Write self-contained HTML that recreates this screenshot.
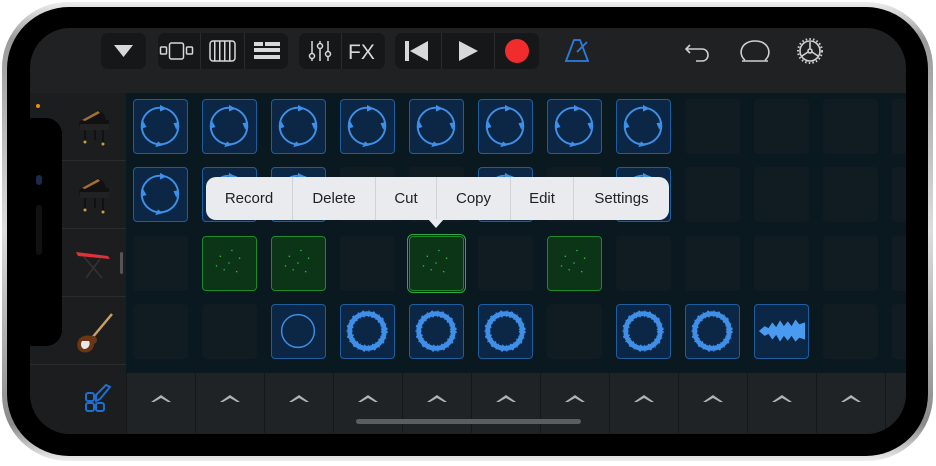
<!DOCTYPE html>
<html><head><meta charset="utf-8">
<style>
*{margin:0;padding:0;box-sizing:border-box}
body{width:936px;height:466px;background:#fff;position:relative;overflow:hidden;font-family:"Liberation Sans",sans-serif}
.abs{position:absolute}
#outer{left:2px;top:2px;width:931px;height:459px;border-radius:66px;background:linear-gradient(#eee,#9a9a9a 8%,#ddd 50%,#8a8a8a 92%,#eee);}
#bez{left:7px;top:7px;width:921px;height:449px;border-radius:62px;background:#000}
#scr{left:30px;top:28px;width:876px;height:406px;border-radius:40px;background:#1f2123;overflow:hidden}
#grid{left:96px;top:65px;width:780px;height:280px;background:#0a1820}
#leftcol{left:0;top:65px;width:96px;height:345px;background:#1c1d1e}
#bottom{left:96px;top:345px;width:780px;height:65px;background:#202325}
#clip{left:30px;top:28px;width:876px;height:406px;border-radius:40px;overflow:hidden}
#inner{left:-30px;top:-28px;width:936px;height:466px}
.btn{position:absolute;top:5px;height:36px;background:#161718;border-radius:7px}
.cell{position:absolute;width:55px;height:55px;border-radius:4px;background:#111c22}
.blue{background:#0b2745;border:1.5px solid #1f5e9e}
.green{background:#0c3417;border:1.5px solid #1f8a2d}
.sel{outline:1.5px solid #2fae3f;outline-offset:1px}
#pop{left:206px;top:177px;width:463px;height:43px;background:#e9ebee;border-radius:10px;display:flex;font-size:15px;color:#222}
#pop div{display:flex;align-items:center;justify-content:center;border-right:1px solid #cfd2d6;height:100%}
#pop div:last-child{border-right:none}
</style></head><body>
<div id="outer" class="abs"></div>
<div id="bez" class="abs"></div>
<div id="scr" class="abs">
  <div id="leftcol" class="abs"></div>
  <div id="grid" class="abs"></div>
  <div id="bottom" class="abs"></div>
</div>
<div class="abs" style="left:28px;top:118px;width:34px;height:228px;background:#000;border-radius:0 16px 16px 0"></div>
<div class="abs" style="left:36px;top:175px;width:6px;height:10px;border-radius:3px;background:#1a2a4a"></div>
<div class="abs" style="left:36px;top:205px;width:6px;height:50px;border-radius:3px;background:#111"></div>
<div class="abs" style="left:36px;top:104px;width:4px;height:4px;border-radius:2px;background:#e8900f"></div>
<div class="abs" style="left:62px;top:160px;width:64px;height:1px;background:#2a2b2c"></div>
<div class="abs" style="left:62px;top:228px;width:64px;height:1px;background:#2a2b2c"></div>
<div class="abs" style="left:62px;top:296px;width:64px;height:1px;background:#2a2b2c"></div>
<div class="abs" style="left:30px;top:364px;width:96px;height:1px;background:#2a2b2c"></div>
<div class="abs" style="left:120px;top:252px;width:3px;height:22px;border-radius:2px;background:#555"></div>

<svg class="abs" style="left:76px;top:106px" width="36" height="42" viewBox="0 0 36 42"><path d="M3 16 L22 4 L28 8 L30 14 L33 14 L33 22 L4 24 Z" fill="#111"/><path d="M6 14 L22 5 L24 7 L9 15Z" fill="#a07030"/><rect x="4" y="18" width="29" height="6" fill="#222"/><rect x="8" y="24" width="2" height="12" fill="#111"/><rect x="26" y="24" width="2" height="14" fill="#111"/><rect x="18" y="24" width="2" height="10" fill="#111"/><circle cx="9" cy="36" r="1.5" fill="#c9a040"/><circle cx="27" cy="38" r="1.5" fill="#c9a040"/></svg>
<svg class="abs" style="left:76px;top:174px" width="36" height="42" viewBox="0 0 36 42"><path d="M3 16 L22 4 L28 8 L30 14 L33 14 L33 22 L4 24 Z" fill="#111"/><path d="M6 14 L22 5 L24 7 L9 15Z" fill="#a07030"/><rect x="4" y="18" width="29" height="6" fill="#222"/><rect x="8" y="24" width="2" height="12" fill="#111"/><rect x="26" y="24" width="2" height="14" fill="#111"/><rect x="18" y="24" width="2" height="10" fill="#111"/><circle cx="9" cy="36" r="1.5" fill="#c9a040"/><circle cx="27" cy="38" r="1.5" fill="#c9a040"/></svg>
<svg class="abs" style="left:74px;top:248px" width="38" height="32" viewBox="0 0 38 32"><path d="M2 4 L34 8 L36 11 L4 8Z" fill="#e0303a"/><path d="M10 9 L28 30 M26 11 L12 30" stroke="#333" stroke-width="1.5"/></svg>
<svg class="abs" style="left:72px;top:312px" width="44" height="44" viewBox="0 0 44 44"><path d="M40 2 L20 26" stroke="#c9a060" stroke-width="2.5"/><path d="M8 26 C4 30 4 38 10 40 C16 42 22 38 22 32 C26 30 26 26 22 24 C18 24 14 22 8 26Z" fill="#6b3616"/><path d="M10 29 C8 32 9 36 12 37 C16 37 19 33 17 29Z" fill="#e8e8e8"/></svg>

<div class="btn" style="left:101px;top:33px;width:45px"></div>
<div class="btn" style="left:158px;top:33px;width:130px"></div>
<div class="btn" style="left:299px;top:33px;width:86px"></div>
<div class="btn" style="left:395px;top:33px;width:144px"></div>
<div class="abs" style="left:200px;top:33px;width:1px;height:36px;background:#2a2b2c"></div>
<div class="abs" style="left:244px;top:33px;width:1px;height:36px;background:#2a2b2c"></div>
<div class="abs" style="left:341px;top:33px;width:1px;height:36px;background:#2a2b2c"></div>
<div class="abs" style="left:441px;top:33px;width:1px;height:36px;background:#2a2b2c"></div>
<div class="abs" style="left:494px;top:33px;width:1px;height:36px;background:#2a2b2c"></div>
<svg class="abs" style="left:0;top:0" width="936" height="100">
 <path d="M114 45 L133 45 L123.5 57Z" fill="#d8d8d8"/>
 <g fill="none" stroke="#d8d8d8" stroke-width="1.5">
  <rect x="160.5" y="47" width="6" height="7" rx="1"/><rect x="169.5" y="43" width="14" height="16" rx="2"/><rect x="186.5" y="47" width="6" height="7" rx="1"/>
  <rect x="210" y="41" width="25" height="20" rx="3"/>
 </g>
 <g fill="#d8d8d8"><rect x="214" y="41" width="1.5" height="20"/><rect x="219" y="41" width="1.5" height="20"/><rect x="224" y="41" width="1.5" height="20"/><rect x="229" y="41" width="1.5" height="20"/>
  <rect x="254" y="42" width="9" height="4"/><rect x="265" y="42" width="15" height="4"/><rect x="254" y="48" width="26" height="4"/><rect x="254" y="55" width="26" height="4"/>
 </g>
 <g stroke="#d8d8d8" stroke-width="1.5" fill="#161718"><line x1="312" y1="41" x2="312" y2="61"/><line x1="320" y1="41" x2="320" y2="61"/><line x1="328" y1="41" x2="328" y2="61"/><circle cx="312" cy="56" r="2.5"/><circle cx="320" cy="46" r="2.5"/><circle cx="328" cy="54" r="2.5"/></g>
 <text x="348" y="59" font-family="Liberation Sans" font-size="21" fill="#d8d8d8">FX</text>
 <rect x="405" y="41" width="4" height="20" fill="#d8d8d8"/><path d="M428 41 L428 61 L410 51Z" fill="#d8d8d8"/>
 <path d="M459 41 L459 61 L478 51Z" fill="#d8d8d8"/>
 <circle cx="517" cy="51" r="12" fill="#f02c2c"/>
 <g fill="none" stroke="#2a7de1" stroke-width="1.8"><path d="M566 61 L574 40 L580 40 L588 61Z"/><line x1="577" y1="52" x2="587" y2="42"/></g>
 <g fill="none" stroke="#d0d0d0" stroke-width="1.6"><path d="M690 45 L686 49 L690 53 M686 49 L702 49 C710 49 710 61 702 61 L696 61"/>
 <path d="M745 60 C738 55 740 41 755 41 C770 41 772 55 765 60 M742 61 L768 61"/>
 <circle cx="810" cy="51" r="10"/><circle cx="810" cy="51" r="2"/><path d="M810 49 L810 42 M808 52 L802 56 M812 52 L818 56"/></g>
 <circle cx="810" cy="51" r="12" fill="none" stroke="#d0d0d0" stroke-width="2" stroke-dasharray="1.5 2.2"/>
</svg>

<div id="clip" class="abs"><div id="inner" class="abs">
<div id="cells"></div>
<div id="bot"></div>
</div></div>
<div class="abs" style="left:356px;top:419px;width:225px;height:5px;border-radius:3px;background:#5b5e61"></div>
<svg class="abs" style="left:84px;top:383px" width="32" height="32" viewBox="0 0 32 32" fill="none" stroke="#1e6fd0" stroke-width="2"><rect x="2" y="10" width="8" height="8" rx="2"/><rect x="2" y="20" width="8" height="8" rx="2"/><rect x="12" y="20" width="8" height="8" rx="2"/><path d="M12 18 L12 12 L22 2 L26 4 L16 16Z"/></svg>

<div id="pop" class="abs">
 <div style="width:87px">Record</div><div style="width:83px">Delete</div><div style="width:61px">Cut</div><div style="width:74px">Copy</div><div style="width:63px">Edit</div><div style="width:95px">Settings</div>
</div>
<div class="abs" style="left:428px;top:219px;width:0;height:0;border-left:8px solid transparent;border-right:8px solid transparent;border-top:9px solid #e9ebee"></div>

<script>
var xs=[133,202,271,340,409,478,547,616,685,754,823,892],ys=[99,167,236,304];
var map=['aaaaaaaa....','aaa..a.a....','.gg.G.g.....','..tccc.ccw..'];
var h='';
function ring(t){
 if(t=='a')return '<circle cx="27" cy="27" r="19" fill="none" stroke="#3f8fe8" stroke-width="2"/><g fill="#3f8fe8"><path d="M27 5 L34 9 L27 12Z"/><path d="M47 23 L44 31 L41 24Z"/><path d="M30 47 L22 49 L25 43Z"/><path d="M7 30 L9 21 L13 28Z"/></g>';
 if(t=='c')return '<circle cx="27" cy="27" r="18" fill="none" stroke="#3f8fe8" stroke-width="5"/><circle cx="27" cy="27" r="18" fill="none" stroke="#3f8fe8" stroke-width="7" stroke-dasharray="2 4 1 3"/>';
 if(t=='t')return '<circle cx="27" cy="27" r="17" fill="none" stroke="#3f8fe8" stroke-width="1.5"/>';
 if(t=='w')return '<path d="M4 27 L10 22 L14 24 L18 18 L22 23 L26 16 L30 22 L34 17 L38 22 L42 15 L46 20 L52 18 L52 36 L46 34 L42 38 L38 32 L34 37 L30 32 L26 38 L22 31 L18 36 L14 30 L10 32Z" fill="#4a9af0"/>';
 if(t=='g'||t=='G')return '<g fill="#2fbf40"><circle cx="18" cy="20" r="0.8"/><circle cx="30" cy="14" r="0.8"/><circle cx="38" cy="22" r="0.8"/><circle cx="22" cy="34" r="0.8"/><circle cx="35" cy="36" r="0.8"/><circle cx="27" cy="27" r="0.8"/><circle cx="14" cy="30" r="0.8"/></g>';
 return '';
}
for(var r=0;r<4;r++)for(var c=0;c<12;c++){
 var t=map[r][c];
 var cls='cell'+(t=='g'||t=='G'?' green':(t!='.'?' blue':''))+(t=='G'?' sel':'');
 h+='<div class="'+cls+'" style="left:'+xs[c]+'px;top:'+ys[r]+'px"><svg width="52" height="52" viewBox="0 0 54 54">'+ring(t)+'</svg></div>';
}
document.getElementById('cells').innerHTML=h;
var b='';
for(var i=0;i<12;i++){var x=126+i*69;
 b+='<div class="abs" style="left:'+x+'px;top:373px;width:1px;height:60px;background:#151718"></div>';
 b+='<svg class="abs" style="left:'+(x+24)+'px;top:393px" width="22" height="10"><path d="M1 9 L11 2 L21 9 L18 9 L11 5 L4 9Z" fill="#b0b3b5"/></svg>';}
document.getElementById('bot').innerHTML=b;
</script>
</body></html>
